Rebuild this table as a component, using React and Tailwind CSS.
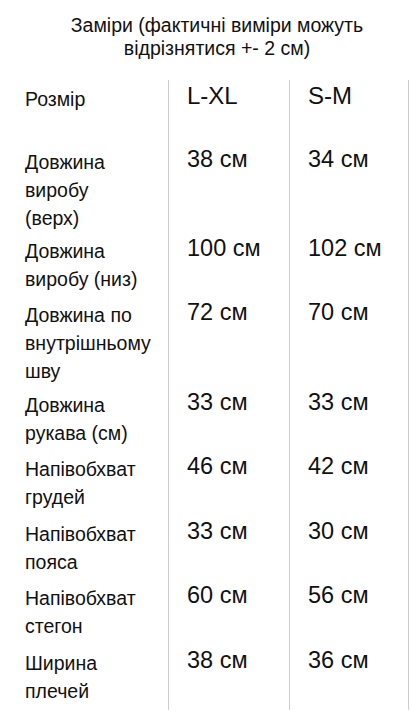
const rows = [
  { label: ['Довжина', 'виробу', '(верх)'], lxl: '38 см', sm: '34 см', h: 'h-[89px]' },
  { label: ['Довжина', 'виробу (низ)'], lxl: '100 см', sm: '102 см', h: 'h-[64px]' },
  { label: ['Довжина по', 'внутрішньому', 'шву'], lxl: '72 см', sm: '70 см', h: 'h-[90px]' },
  { label: ['Довжина', 'рукава (см)'], lxl: '33 см', sm: '33 см', h: 'h-[64px]' },
  { label: ['Напівобхват', 'грудей'], lxl: '46 см', sm: '42 см', h: 'h-[65px]' },
  { label: ['Напівобхват', 'пояса'], lxl: '33 см', sm: '30 см', h: 'h-[64px]' },
  { label: ['Напівобхват', 'стегон'], lxl: '60 см', sm: '56 см', h: 'h-[65px]' },
  { label: ['Ширина', 'плечей'], lxl: '38 см', sm: '36 см', h: 'h-[64px]' },
];

function Row({ label, lxl, sm, h }) {
  return (
    <div className={`flex ${h}`}>
      <div className="w-[168px] pl-[25px] pt-[3px] text-[19.5px] leading-[28px]">
        {label.map((l) => (
          <div key={l}>{l}</div>
        ))}
      </div>
      <div className="w-[121px] border-l border-[#cccccc] pl-[18px] text-[23.5px] leading-[28px]">{lxl}</div>
      <div className="w-[120px] border-l border-r border-[#cccccc] pl-[18px] text-[23.5px] leading-[28px]">{sm}</div>
    </div>
  );
}

export default function App() {
  return (
    <div className="w-[410px] h-[726px] bg-white text-[#111] overflow-hidden" style={{ fontFamily: '"Liberation Sans", Arial, sans-serif' }}>
      <div className="pt-[14px] pl-[24px] text-center text-[19.5px] leading-[23px]">
        <div>Заміри (фактичні виміри можуть</div>
        <div>відрізнятися +- 2 см)</div>
      </div>
      <div className="mt-[20px]">
        <div className="flex h-[65px]">
          <div className="w-[168px] pl-[25px] pt-[5px] text-[19.5px] leading-[28px]">Розмір</div>
          <div className="w-[121px] border-l border-[#cccccc] pl-[18px] pt-[2px] text-[24px] leading-[28px]">L-XL</div>
          <div className="w-[120px] border-l border-r border-[#cccccc] pl-[18px] pt-[2px] text-[24px] leading-[28px]">S-M</div>
        </div>
        {rows.map((r, i) => (
          <Row key={i} {...r} />
        ))}
      </div>
    </div>
  );
}
